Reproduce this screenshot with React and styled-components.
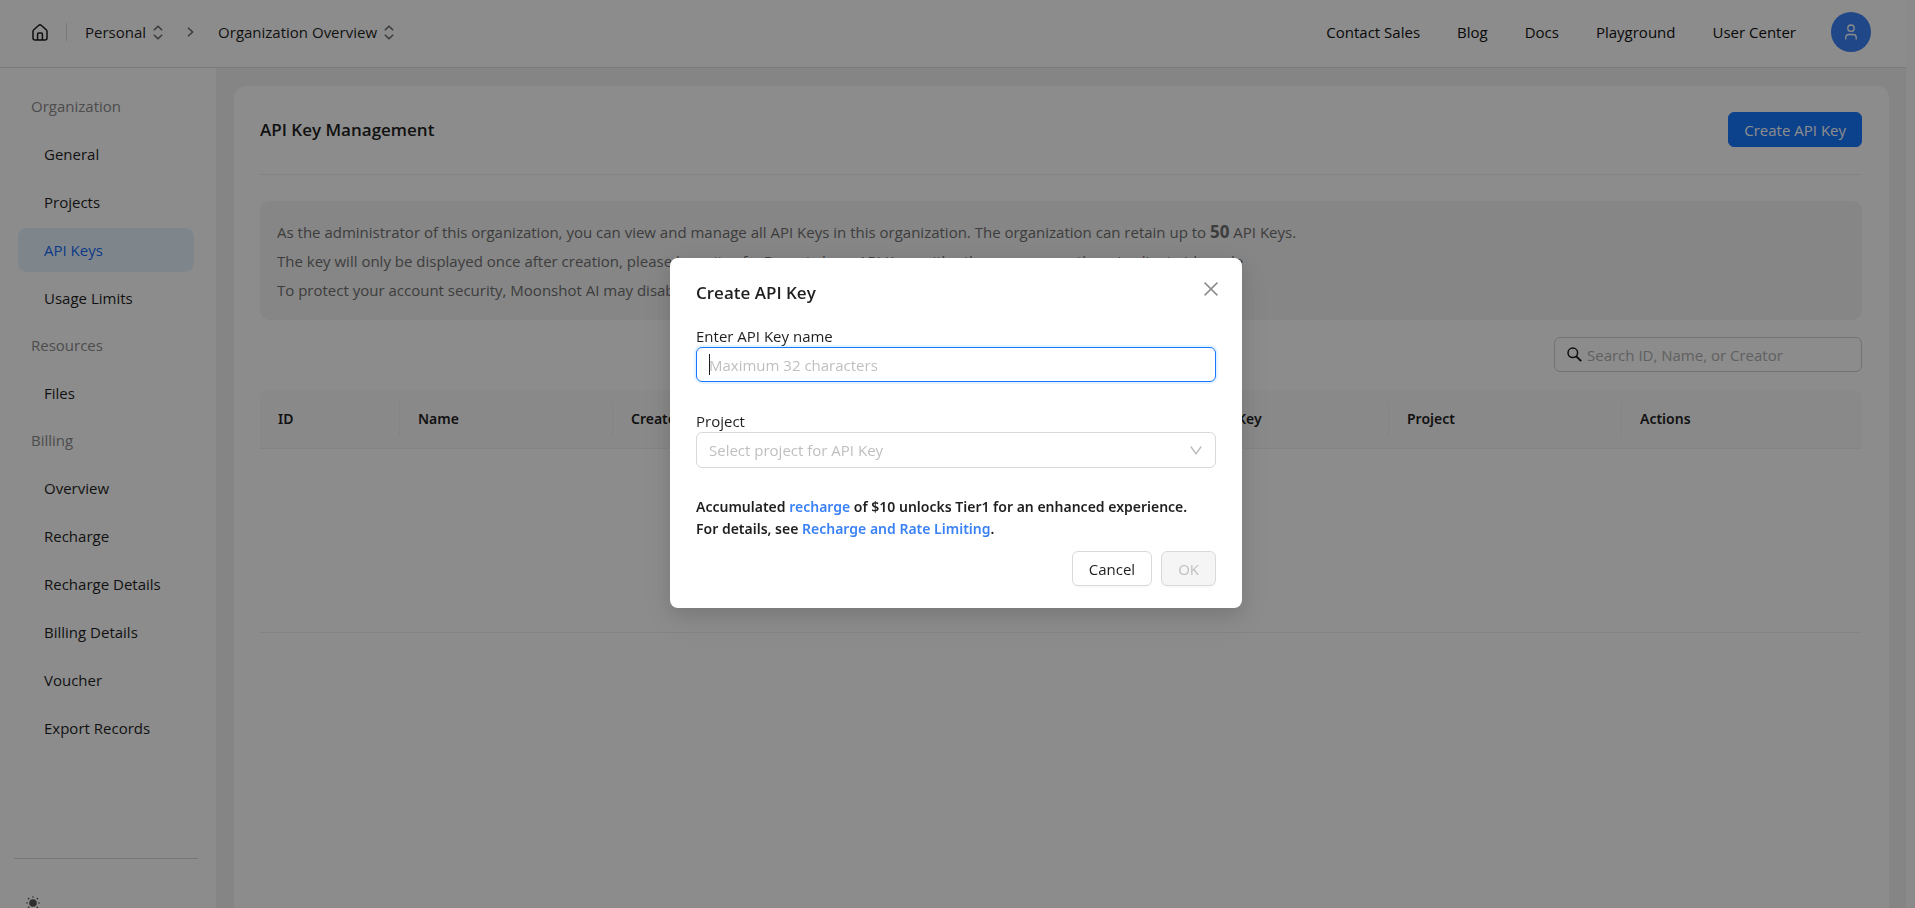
import styled, { createGlobalStyle } from "styled-components"

const NAV = [
    { title: "Organization", items: ["General", "Projects", "API Keys", "Usage Limits"] },
    { title: "Resources", items: ["Files"] },
    { title: "Billing", items: ["Overview", "Recharge", "Recharge Details", "Billing Details", "Voucher", "Export Records"] },
]

const LINKS = ["Contact Sales", "Blog", "Docs", "Playground", "User Center"]

const COLUMNS = [
    { label: "ID", width: "140px" },
    { label: "Name", width: "213px" },
    { label: "Created At", width: "303px" },
    { label: "Creator", width: "303px" },
    { label: "Key", width: "170px" },
    { label: "Project", width: "233px" },
    { label: "Actions" },
]

function HomeIcon() {
    return (
        <svg width="16" height="17" viewBox="0 0 16 17" fill="none" stroke="#1a1a1a" strokeWidth="1.5" strokeLinejoin="round" aria-hidden="true">
            <path d="M1 7.4 Q1 6.4 1.8 5.7 L6.8 1.3 Q8 0.4 9.2 1.3 L14.2 5.7 Q15 6.4 15 7.4 V14 Q15 16 13 16 H3 Q1 16 1 14 Z" />
            <path d="M5.6 16 V10 Q5.6 9 6.6 9 H9.4 Q10.4 9 10.4 10 V16" />
        </svg>
    )
}

function UpDownIcon() {
    return (
        <svg width="10" height="15" viewBox="0 0 10 15" fill="none" stroke="#666" strokeWidth="1.4" aria-hidden="true">
            <path d="M0.8 5.2 L5 1.2 L9.2 5.2 M0.8 9.8 L5 13.8 L9.2 9.8" />
        </svg>
    )
}

function RightIcon() {
    return (
        <svg width="7" height="10" viewBox="0 0 7 10" fill="none" stroke="#666" strokeWidth="1.4" aria-hidden="true">
            <path d="M1 0.7 L5.6 5 L1 9.3" />
        </svg>
    )
}

function UserIcon() {
    return (
        <svg width="12" height="16" viewBox="0 0 12 16" fill="none" stroke="#fff" strokeWidth="1.3" aria-hidden="true">
            <circle cx="6" cy="4.2" r="3.2" />
            <path d="M0.8 15.5 V13.5 Q0.8 10.5 3.8 10.5 H8.2 Q11.2 10.5 11.2 13.5 V15.5" />
        </svg>
    )
}

function SearchIcon() {
    return (
        <svg width="15" height="15" viewBox="0 0 15 15" fill="none" stroke="#1a1a1a" strokeWidth="1.5" aria-hidden="true">
            <circle cx="5.8" cy="5.8" r="4.8" />
            <path d="M9.3 9.3 L14.2 14.2" strokeWidth="1.9" />
        </svg>
    )
}

function SunIcon() {
    return (
        <svg width="14" height="14" viewBox="0 0 14 14" fill="#555" aria-hidden="true">
            <circle cx="7" cy="7" r="3.8" />
            <g>
                <circle cx="7" cy="1" r="0.8" />
                <circle cx="7" cy="13" r="0.8" />
                <circle cx="1" cy="7" r="0.8" />
                <circle cx="13" cy="7" r="0.8" />
                <circle cx="2.6" cy="2.6" r="0.9" />
                <circle cx="11.4" cy="2.6" r="0.9" />
                <circle cx="2.6" cy="11.4" r="0.9" />
                <circle cx="11.4" cy="11.4" r="0.9" />
            </g>
        </svg>
    )
}

function CloseIcon() {
    return (
        <svg width="14" height="14" viewBox="0 0 14 14" fill="none" stroke="#8c8c8c" strokeWidth="1.5" aria-hidden="true">
            <path d="M0.6 0.6 L13.4 13.4 M13.4 0.6 L0.6 13.4" />
        </svg>
    )
}

function DownIcon() {
    return (
        <svg width="12" height="9" viewBox="0 0 12 9" fill="none" stroke="#b8b8b8" strokeWidth="1.3" aria-hidden="true">
            <path d="M0.8 0.5 L6 7.8 L11.2 0.5" />
        </svg>
    )
}

function TopBar() {
    return (
        <Header>
            <Crumbs>
                <HomeLink href="#home" aria-label="Home"><HomeIcon /></HomeLink>
                <Switcher>Personal<UpDownIcon /></Switcher>
                <RightIcon />
                <Switcher>Organization Overview<UpDownIcon /></Switcher>
            </Crumbs>
            <TopLinks>
                {LINKS.map(link => <TopLink key={link} href="#top">{link}</TopLink>)}
                <Avatar aria-label="Account"><UserIcon /></Avatar>
            </TopLinks>
        </Header>
    )
}

function SideMenu() {
    return (
        <Sidebar>
            <Menu>
                {NAV.map(group => (
                    <div key={group.title}>
                        <GroupTitle>{group.title}</GroupTitle>
                        <GroupList>
                            {group.items.map(item => (
                                <li key={item}>
                                    <MenuLink href="#menu" $active={item === "API Keys"}>{item}</MenuLink>
                                </li>
                            ))}
                        </GroupList>
                    </div>
                ))}
            </Menu>
            <SideFooter>
                <ThemeButton aria-label="Theme"><SunIcon /></ThemeButton>
            </SideFooter>
        </Sidebar>
    )
}

function KeysPage() {
    return (
        <Content>
            <Card>
                <CardHeader>
                    <h1>API Key Management</h1>
                    <Button $primary>Create API Key</Button>
                </CardHeader>
                <Notice>
                    <p>As the administrator of this organization, you can view and manage all API Keys in this organization. The organization can retain up to <strong>50</strong> API Keys.</p>
                    <p>The key will only be displayed once after creation, please keep it safe. Do not share API Keys with others or expose them in client-side code</p>
                    <p>To protect your account security, Moonshot AI may disable API Keys that are found to be leaked.</p>
                </Notice>
                <SearchBox>
                    <SearchIcon />
                    <input type="search" aria-label="Search" placeholder="Search ID, Name, or Creator" />
                </SearchBox>
                <Table>
                    <colgroup>
                        {COLUMNS.map(col => <Col key={col.label} $width={col.width} />)}
                    </colgroup>
                    <thead>
                        <tr>
                            {COLUMNS.map(col => <th key={col.label} scope="col"><span>{col.label}</span></th>)}
                        </tr>
                    </thead>
                    <tbody>
                        <tr>
                            <EmptyCell colSpan={COLUMNS.length} />
                        </tr>
                    </tbody>
                </Table>
            </Card>
        </Content>
    )
}

function CreateKeyModal() {
    return (
        <Overlay>
            <Dialog role="dialog" aria-modal="true" aria-labelledby="dialog-title">
                <DialogHeader>
                    <h2 id="dialog-title">Create API Key</h2>
                    <CloseButton aria-label="Close"><CloseIcon /></CloseButton>
                </DialogHeader>
                <Field>
                    <label htmlFor="key-name">Enter API Key name</label>
                    <NameBox>
                        <input id="key-name" maxLength={32} placeholder="Maximum 32 characters" autoFocus />
                        <Caret />
                    </NameBox>
                </Field>
                <Field>
                    <label htmlFor="key-project">Project</label>
                    <SelectBox>
                        <select id="key-project" defaultValue="">
                            <option value="" disabled>Select project for API Key</option>
                        </select>
                        <DownIcon />
                    </SelectBox>
                </Field>
                <Hint>
                    <p>Accumulated <a href="#recharge">recharge</a> of $10 unlocks Tier1 for an enhanced experience.</p>
                    <p>For details, see <a href="#limits">Recharge and Rate Limiting</a>.</p>
                </Hint>
                <Actions>
                    <Button>Cancel</Button>
                    <Button disabled>OK</Button>
                </Actions>
            </Dialog>
        </Overlay>
    )
}

export default function App() {
    return (
        <>
            <GlobalStyle />
            <Page>
                <TopBar />
                <Body>
                    <SideMenu />
                    <KeysPage />
                </Body>
            </Page>
            <CreateKeyModal />
        </>
    )
}

const GlobalStyle = createGlobalStyle`
    * {
        box-sizing: border-box;
    }
    body {
        margin: 0;
        background: #fcfcfc;
        color: #1f1f1f;
        font-family: "Open Sans", "Noto Sans", sans-serif;
        font-size: 15px;
        line-height: 22px;
    }
    button, input, select {
        font: inherit;
        color: inherit;
    }
    a {
        color: inherit;
        text-decoration: none;
    }
    h1, h2, p, ul {
        margin: 0;
        padding: 0;
    }
    ul {
        list-style: none;
    }
`

const Page = styled.div`
    height: 100vh;
    display: flex;
    flex-direction: column;
    padding-right: 9px;
    overflow: hidden;
`

const Header = styled.header`
    height: 68px;
    flex: none;
    display: flex;
    align-items: center;
    justify-content: space-between;
    padding: 0 35px 3px 32px;
    background: #fff;
    border-bottom: 1px solid #e0e0e0;
`

const Crumbs = styled.nav`
    display: flex;
    align-items: center;
    gap: 24px;
`

const HomeLink = styled.a`
    display: flex;
    align-items: center;
    height: 18px;
    padding-right: 18px;
    border-right: 1px solid #dcdcdc;
    margin-right: -6px;
`

const Switcher = styled.button`
    display: flex;
    align-items: center;
    gap: 7px;
    padding: 0;
    border: 0;
    background: none;
`

const TopLinks = styled.nav`
    display: flex;
    align-items: center;
    gap: 37px;
`

const TopLink = styled.a`
    color: #111;
`

const Avatar = styled.button`
    width: 40px;
    height: 40px;
    display: flex;
    align-items: center;
    justify-content: center;
    margin-left: -2px;
    padding: 0;
    border: 0;
    border-radius: 50%;
    background: #3b82f6;
`

const Body = styled.div`
    flex: 1;
    min-height: 0;
    display: flex;
`

const Sidebar = styled.aside`
    width: 216px;
    flex: none;
    display: flex;
    flex-direction: column;
    padding: 17px 18px 0 14px;
    background: #fff;
`

const Menu = styled.nav`
    flex: 1;
    min-height: 0;
    padding: 0 4px;
`

const GroupTitle = styled.div`
    padding: 10px 13px;
    color: #8c8c8c;
`

const GroupList = styled.ul`
    display: flex;
    flex-direction: column;
    gap: 4px;
    padding: 5px 0 4px;
`

const MenuLink = styled.a`
    display: block;
    padding: 11px 26px;
    border-radius: 9px;
    color: ${props => props.$active ? "#1668f5" : "#1f1f1f"};
    background: ${props => props.$active ? "#e6f4ff" : "none"};
`

const SideFooter = styled.div`
    height: 50px;
    flex: none;
    padding: 37px 12px 0;
    border-top: 1px solid #d9d9d9;
    overflow: hidden;
`

const ThemeButton = styled.button`
    display: flex;
    padding: 0;
    border: 0;
    background: none;
`

const Content = styled.main`
    flex: 1;
    min-width: 0;
    display: flex;
    padding: 18px 17px 0 18px;
    background: #f3f3f3;
`

const Card = styled.section`
    flex: 1;
    min-width: 0;
    padding: 26px 27px 0 26px;
    border-radius: 12px 12px 0 0;
    background: #fff;
`

const CardHeader = styled.div`
    display: flex;
    align-items: center;
    justify-content: space-between;
    padding-bottom: 27px;
    border-bottom: 1px solid #f0f0f0;

    h1 {
        font-size: 17px;
        font-weight: 600;
    }
`

const Button = styled.button`
    height: 35px;
    padding: 0 ${props => props.$primary ? "15px" : "16px"};
    border: 1px solid ${props => props.$primary ? "#1677ff" : "#d9d9d9"};
    border-radius: 6px;
    color: ${props => props.$primary ? "#fff" : "#1f1f1f"};
    background: ${props => props.$primary ? "#1677ff" : "#fff"};
    box-shadow: 0 2px 0 rgba(0, 0, 0, 0.02);

    &:disabled {
        color: #bfbfbf;
        background: #f5f5f5;
    }
`

const Notice = styled.div`
    display: flex;
    flex-direction: column;
    gap: 7px;
    margin: 26px 0 17px;
    padding: 20px 17px 19px;
    border-radius: 9px;
    color: #707070;
    background: #f4f4f4;
    white-space: nowrap;

    strong {
        font-size: 17px;
        font-weight: 700;
    }
`

const SearchBox = styled.div`
    width: 308px;
    height: 35px;
    display: flex;
    align-items: center;
    gap: 5px;
    margin-left: auto;
    padding: 0 12px;
    border: 1px solid #d0d0d0;
    border-radius: 6px;

    input {
        flex: 1;
        min-width: 0;
        padding: 0;
        border: 0;
        outline: 0;
        background: none;
    }
    input::placeholder {
        color: #b0b0b0;
    }
`

const Table = styled.table`
    width: 100%;
    margin-top: 18px;
    table-layout: fixed;
    border-collapse: separate;
    border-spacing: 0;

    th {
        padding: 12px 0;
        text-align: left;
        font-family: "Noto Sans", sans-serif;
        font-size: 14px;
        font-weight: 600;
        background: #fafafa;
        border-bottom: 1px solid #f0f0f0;
    }
    th span {
        display: block;
        padding: 6px 18px;
        border-right: 1px solid #f0f0f0;
    }
    th:first-child {
        border-top-left-radius: 9px;
    }
    th:last-child {
        border-top-right-radius: 9px;
    }
    th:last-child span {
        border-right: 0;
    }
`

const Col = styled.col`
    width: ${props => props.$width || "auto"};
`

const EmptyCell = styled.td`
    height: 184px;
    border-bottom: 1px solid #f0f0f0;
`

const Overlay = styled.div`
    position: fixed;
    inset: 0;
    display: flex;
    justify-content: center;
    align-items: flex-start;
    padding-top: 258px;
    padding-right: 3px;
    background: rgba(0, 0, 0, 0.45);
`

const Dialog = styled.section`
    width: 572px;
    padding: 22px 26px;
    border-radius: 8px;
    background: #fff;
    box-shadow: 0 6px 18px rgba(0, 0, 0, 0.1), 0 10px 30px 8px rgba(0, 0, 0, 0.06);
`

const DialogHeader = styled.div`
    display: flex;
    justify-content: space-between;
    align-items: flex-start;
    margin-bottom: 19px;

    h2 {
        font-size: 17px;
        line-height: 26px;
        font-weight: 600;
    }
`

const CloseButton = styled.button`
    display: flex;
    margin-right: -2px;
    padding: 2px 0;
    border: 0;
    background: none;
`

const Field = styled.div`
    display: flex;
    flex-direction: column;
    margin-bottom: 28px;
`

const NameBox = styled.div`
    position: relative;
    display: flex;

    input {
        flex: 1;
        height: 35px;
        padding: 0 12px;
        border: 1px solid #1677ff;
        border-radius: 6px;
        outline: 0;
        caret-color: transparent;
        box-shadow: 0 0 0 2px rgba(5, 145, 255, 0.1);
    }
    input::placeholder {
        color: #bfbfbf;
    }
`

const Caret = styled.span`
    position: absolute;
    top: 7px;
    left: 13px;
    width: 1px;
    height: 21px;
    background: #1f1f1f;
    pointer-events: none;
`

const SelectBox = styled.div`
    height: 36px;
    display: flex;
    align-items: center;
    padding-right: 13px;
    border: 1px solid #d9d9d9;
    border-radius: 6px;

    select {
        flex: 1;
        height: 100%;
        padding: 0 12px;
        border: 0;
        outline: 0;
        appearance: none;
        color: #bfbfbf;
        background: none;
    }
`

const Hint = styled.div`
    margin-bottom: 11px;
    font-family: "Noto Sans", sans-serif;
    font-size: 14px;
    font-weight: 600;

    a {
        color: #3b82f6;
    }
`

const Actions = styled.div`
    display: flex;
    justify-content: flex-end;
    gap: 9px;
`
